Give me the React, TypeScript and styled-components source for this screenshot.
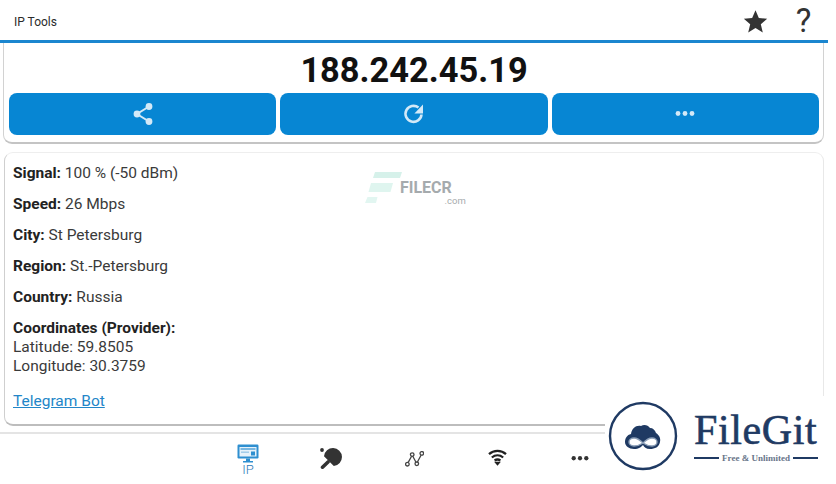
import styled, { createGlobalStyle } from 'styled-components'

const GlobalStyle = createGlobalStyle`
  html, body {
    margin: 0;
    padding: 0;
    background: #fff;
  }
  body {
    font-family: Roboto, "Liberation Sans", sans-serif;
  }
`

const Page = styled.div`
  position: relative;
  width: 836px;
  height: 484px;
  overflow: hidden;
  background: #fff;
`

const Frame = styled.div`
  width: 828px;
  height: 484px;
  display: flex;
  flex-direction: column;
`

const Header = styled.header`
  height: 40px;
  flex-shrink: 0;
  display: flex;
  align-items: center;
  padding: 0 16px 0 14px;
  border-bottom: 3px solid #1b86cf;
`

const Title = styled.div`
  flex: 1;
  font-size: 12px;
  color: #2b2b2b;
  margin-top: 3px;
`

const HeaderIcons = styled.div`
  display: flex;
  align-items: center;
  gap: 27px;
  margin-top: 2px;
`

const Question = styled.span`
  width: 17px;
  text-align: center;
  font-size: 33px;
  line-height: 36px;
  font-weight: 400;
  color: #333;
`

const IpCard = styled.section`
  margin: 0 4px 0 3px;
  height: 101px;
  flex-shrink: 0;
  box-sizing: border-box;
  padding: 5px 4px 0 5px;
  border: 1px solid #d2d2d2;
  border-top: none;
  border-bottom: 2px solid #c4c4c4;
  border-radius: 0 0 9px 9px;
`

const IpText = styled.div`
  text-align: center;
  font-size: 34.4px;
  line-height: 44.5px;
  font-weight: 700;
  color: #111;
`

const Buttons = styled.div`
  display: grid;
  grid-template-columns: repeat(3, 1fr);
  gap: 4px;
`

const ActionButton = styled.button`
  height: 42px;
  padding: 0;
  border: none;
  border-radius: 8px;
  background: #0786d3;
  display: flex;
  align-items: center;
  justify-content: center;
`

const InfoCard = styled.section`
  margin: 8px 4px 0 4px;
  height: 274px;
  flex-shrink: 0;
  box-sizing: border-box;
  padding: 11px 8px 0 8px;
  border: 1px solid #e8e8e8;
  border-top-color: #eee;
  border-bottom: 2px solid #bdbdbd;
  border-left-color: #cfcfcf;
  border-radius: 9px;
  font-size: 15.5px;
  line-height: 19px;
  color: #3a3a3a;
`

const InfoRow = styled.div`
  margin-bottom: 12px;
  b {
    font-weight: 700;
    color: #222;
  }
`

const TelegramLink = styled.a`
  display: block;
  margin-top: 16px;
  color: #2386c8;
  text-decoration: underline;
`

const BottomNav = styled.nav`
  margin-top: 6px;
  flex: 1;
  border-top: 2px solid #e4e4e4;
  display: flex;
  justify-content: center;
`

const NavItem = styled.div<{ $top: number }>`
  width: 83px;
  height: 48px;
  display: flex;
  flex-direction: column;
  align-items: center;
  padding-top: ${(p) => p.$top}px;
  box-sizing: border-box;
`

const NavLabel = styled.span`
  font-size: 13px;
  line-height: 13px;
  font-weight: 300;
  color: #2a78b8;
`

const Filecr = styled.div`
  position: absolute;
  left: 365px;
  top: 172px;
  display: flex;
  align-items: flex-start;
`

const FilecrText = styled.div`
  margin: 7px 0 0 -2px;
  font-size: 16px;
  line-height: 17px;
  font-weight: 700;
  color: #8f9699;
  opacity: 0.8;
`

const FilecrCom = styled.div`
  margin: 0 -14px 0 0;
  text-align: right;
  font-size: 9.5px;
  line-height: 9px;
  font-weight: 400;
`

const FileGit = styled.div`
  position: absolute;
  left: 605px;
  top: 396px;
  width: 223px;
  height: 80px;
  background: #fff;
  display: flex;
  align-items: center;
  padding-left: 3px;
  box-sizing: border-box;
`

const FileGitCopy = styled.div`
  margin: -1px 0 0 16px;
  width: 124px;
  color: #1f3a63;
`

const FileGitName = styled.div`
  font-family: "Liberation Serif", serif;
  font-size: 42px;
  line-height: 42px;
  letter-spacing: 0.6px;
  -webkit-text-stroke: 0.6px #1f3a63;
`

const Tagline = styled.div`
  display: flex;
  align-items: center;
  gap: 3px;
  margin-top: 3px;
  font-family: "Liberation Serif", serif;
  font-size: 9px;
  line-height: 9px;
  font-weight: 700;
  color: #68758a;
  white-space: nowrap;
  &::before, &::after {
    content: "";
    flex: 1;
    height: 2.5px;
    background: #1f3a63;
  }
`

const ShareIcon = () => (
  <svg width="24" height="24" viewBox="0 0 24 24">
    <path d="M18 4.5 6 12l12 7.5" fill="none" stroke="#d3e9f7" strokeWidth="2" />
    <circle cx="18" cy="4.5" r="3.4" fill="#d3e9f7" />
    <circle cx="6" cy="12" r="3.4" fill="#d3e9f7" />
    <circle cx="18" cy="19.5" r="3.4" fill="#d3e9f7" />
  </svg>
)

const RefreshIcon = () => (
  <svg width="24" height="24" viewBox="0 0 24 24">
    <path d="M19.5 12.5A8 8 0 1 1 16.5 5.6" fill="none" stroke="#d3e9f7" strokeWidth="2.6" />
    <path d="M21 2.5v9h-8.6z" fill="#d3e9f7" />
  </svg>
)

const Dots = ({ color, size }: { color: string; size: number }) => (
  <svg width={size} height={size / 4} viewBox="0 0 20 5">
    <circle cx="3" cy="2.5" r="2.4" fill={color} />
    <circle cx="10" cy="2.5" r="2.4" fill={color} />
    <circle cx="17" cy="2.5" r="2.4" fill={color} />
  </svg>
)

const StarIcon = () => (
  <svg width="25" height="25" viewBox="0 0 24 24">
    <path d="M12 1.2l3.2 7.4 8 .7-6.1 5.3 1.9 7.9-7-4.2-7 4.2 1.9-7.9L.8 9.3l8-.7z" fill="#333" />
  </svg>
)

const MonitorIcon = () => (
  <svg width="22" height="19" viewBox="0 0 22 19">
    <rect x="0.5" y="0.5" width="21" height="14" rx="1.2" fill="#2e8fd0" />
    <rect x="2.5" y="3" width="17" height="9.5" fill="#e6f2fa" />
    <rect x="3.5" y="4" width="15" height="2" fill="#2e8fd0" opacity="0.6" />
    <rect x="14" y="7.5" width="4" height="4" fill="#2e8fd0" />
    <rect x="4" y="7.5" width="8" height="1.4" fill="#9cc9e8" />
    <path d="M9 14.5h4v2.4h3V18.6H6v-1.7h3z" fill="#2e8fd0" />
  </svg>
)

const PaddleIcon = () => (
  <svg width="22" height="21" viewBox="0 0 22 21">
    <circle cx="2" cy="2" r="1.9" fill="#333" />
    <path d="M4 8.2A9 9 0 1 1 13.8 18Z" fill="#333" />
    <path d="M8 14 2.5 19.2" stroke="#333" strokeWidth="3.6" strokeLinecap="round" />
  </svg>
)

const GraphIcon = () => (
  <svg width="19" height="16" viewBox="0 0 19 16" fill="none" stroke="#444" strokeWidth="1.3">
    <path d="M3.2 11.4 6.6 5.2M7.8 5.2l3.2 6M12.4 11l3.8-7" />
    <circle cx="2.4" cy="13.2" r="1.8" />
    <circle cx="7.2" cy="3.6" r="1.8" />
    <circle cx="11.8" cy="12.8" r="1.8" />
    <circle cx="16.8" cy="2.4" r="1.8" />
  </svg>
)

const WifiIcon = () => (
  <svg width="19" height="17" viewBox="0 0 20 18" fill="none" stroke="#222" strokeWidth="2.4">
    <path d="M1 5.4C6 .8 14 .8 19 5.4" />
    <path d="M4 9C7.6 6 12.4 6 16 9" />
    <path d="M6.9 12.2c1.9-1.3 4.3-1.3 6.2 0" />
    <path d="M6.4 13.4h7.2L10 17.8z" fill="#222" stroke="none" />
  </svg>
)

const FilecrMark = () => (
  <svg width="37" height="31" viewBox="0 0 37 31">
    <path d="M10 0h27l-2 6H8z" fill="#d6f1ea" />
    <path d="M6 11h22l-2.5 9H3.5z" fill="#dff5ef" />
    <path d="M2.5 25h10l-1.5 6H0z" fill="#e2f6f1" />
  </svg>
)

const FileGitMark = () => (
  <svg width="70" height="70" viewBox="0 0 70 70" style={{ flexShrink: 0 }}>
    <circle cx="35" cy="35" r="33" fill="#fff" stroke="#1f3a63" strokeWidth="2.4" />
    <path d="M17 41c0-4 2-7 6-8 1-6 5-9 10-8 3-2 7-1 9 2 3 0 5 2 6 5 3 2 5 5 4 9-1 5-5 7-10 7-4 0-6-2-7-4-2 2-4 4-9 4-5 0-9-3-9-7z" fill="#1f3a63" />
    <path d="M35 42c-3-3-6-5-9-5-3 0-5 2-5 4s2 4 5 4c3 0 6-1 9-3zm0 0c3-3 6-5 9-5 3 0 5 2 5 4s-2 4-5 4c-3 0-6-1-9-3z" fill="#fff" stroke="#8da0b8" strokeWidth="1.4" />
  </svg>
)

const infoRows = [
  { label: 'Signal:', value: '100 % (-50 dBm)' },
  { label: 'Speed:', value: '26 Mbps' },
  { label: 'City:', value: 'St Petersburg' },
  { label: 'Region:', value: 'St.-Petersburg' },
  { label: 'Country:', value: 'Russia' },
]

const App = () => {
  return (
    <Page>
      <GlobalStyle />
      <Frame>
        <Header>
          <Title>IP Tools</Title>
          <HeaderIcons>
            <StarIcon />
            <Question>?</Question>
          </HeaderIcons>
        </Header>
        <IpCard>
          <IpText>188.242.45.19</IpText>
          <Buttons>
            <ActionButton><ShareIcon /></ActionButton>
            <ActionButton><RefreshIcon /></ActionButton>
            <ActionButton><Dots color="#d3e9f7" size={20} /></ActionButton>
          </Buttons>
        </IpCard>
        <InfoCard>
          {infoRows.map((row) => (
            <InfoRow key={row.label}>
              <b>{row.label}</b> {row.value}
            </InfoRow>
          ))}
          <InfoRow>
            <b>Coordinates (Provider):</b>
            <br />
            Latitude: 59.8505
            <br />
            Longitude: 30.3759
          </InfoRow>
          <TelegramLink href="#">Telegram Bot</TelegramLink>
        </InfoCard>
        <BottomNav>
          <NavItem $top={10}>
            <MonitorIcon />
            <NavLabel>IP</NavLabel>
          </NavItem>
          <NavItem $top={14}><PaddleIcon /></NavItem>
          <NavItem $top={17}><GraphIcon /></NavItem>
          <NavItem $top={15}><WifiIcon /></NavItem>
          <NavItem $top={22}><Dots color="#333" size={18} /></NavItem>
        </BottomNav>
      </Frame>
      <Filecr>
        <FilecrMark />
        <FilecrText>
          FILECR
          <FilecrCom>.com</FilecrCom>
        </FilecrText>
      </Filecr>
      <FileGit>
        <FileGitMark />
        <FileGitCopy>
          <FileGitName>FileGit</FileGitName>
          <Tagline>Free &amp; Unlimited</Tagline>
        </FileGitCopy>
      </FileGit>
    </Page>
  )
}

export default App
